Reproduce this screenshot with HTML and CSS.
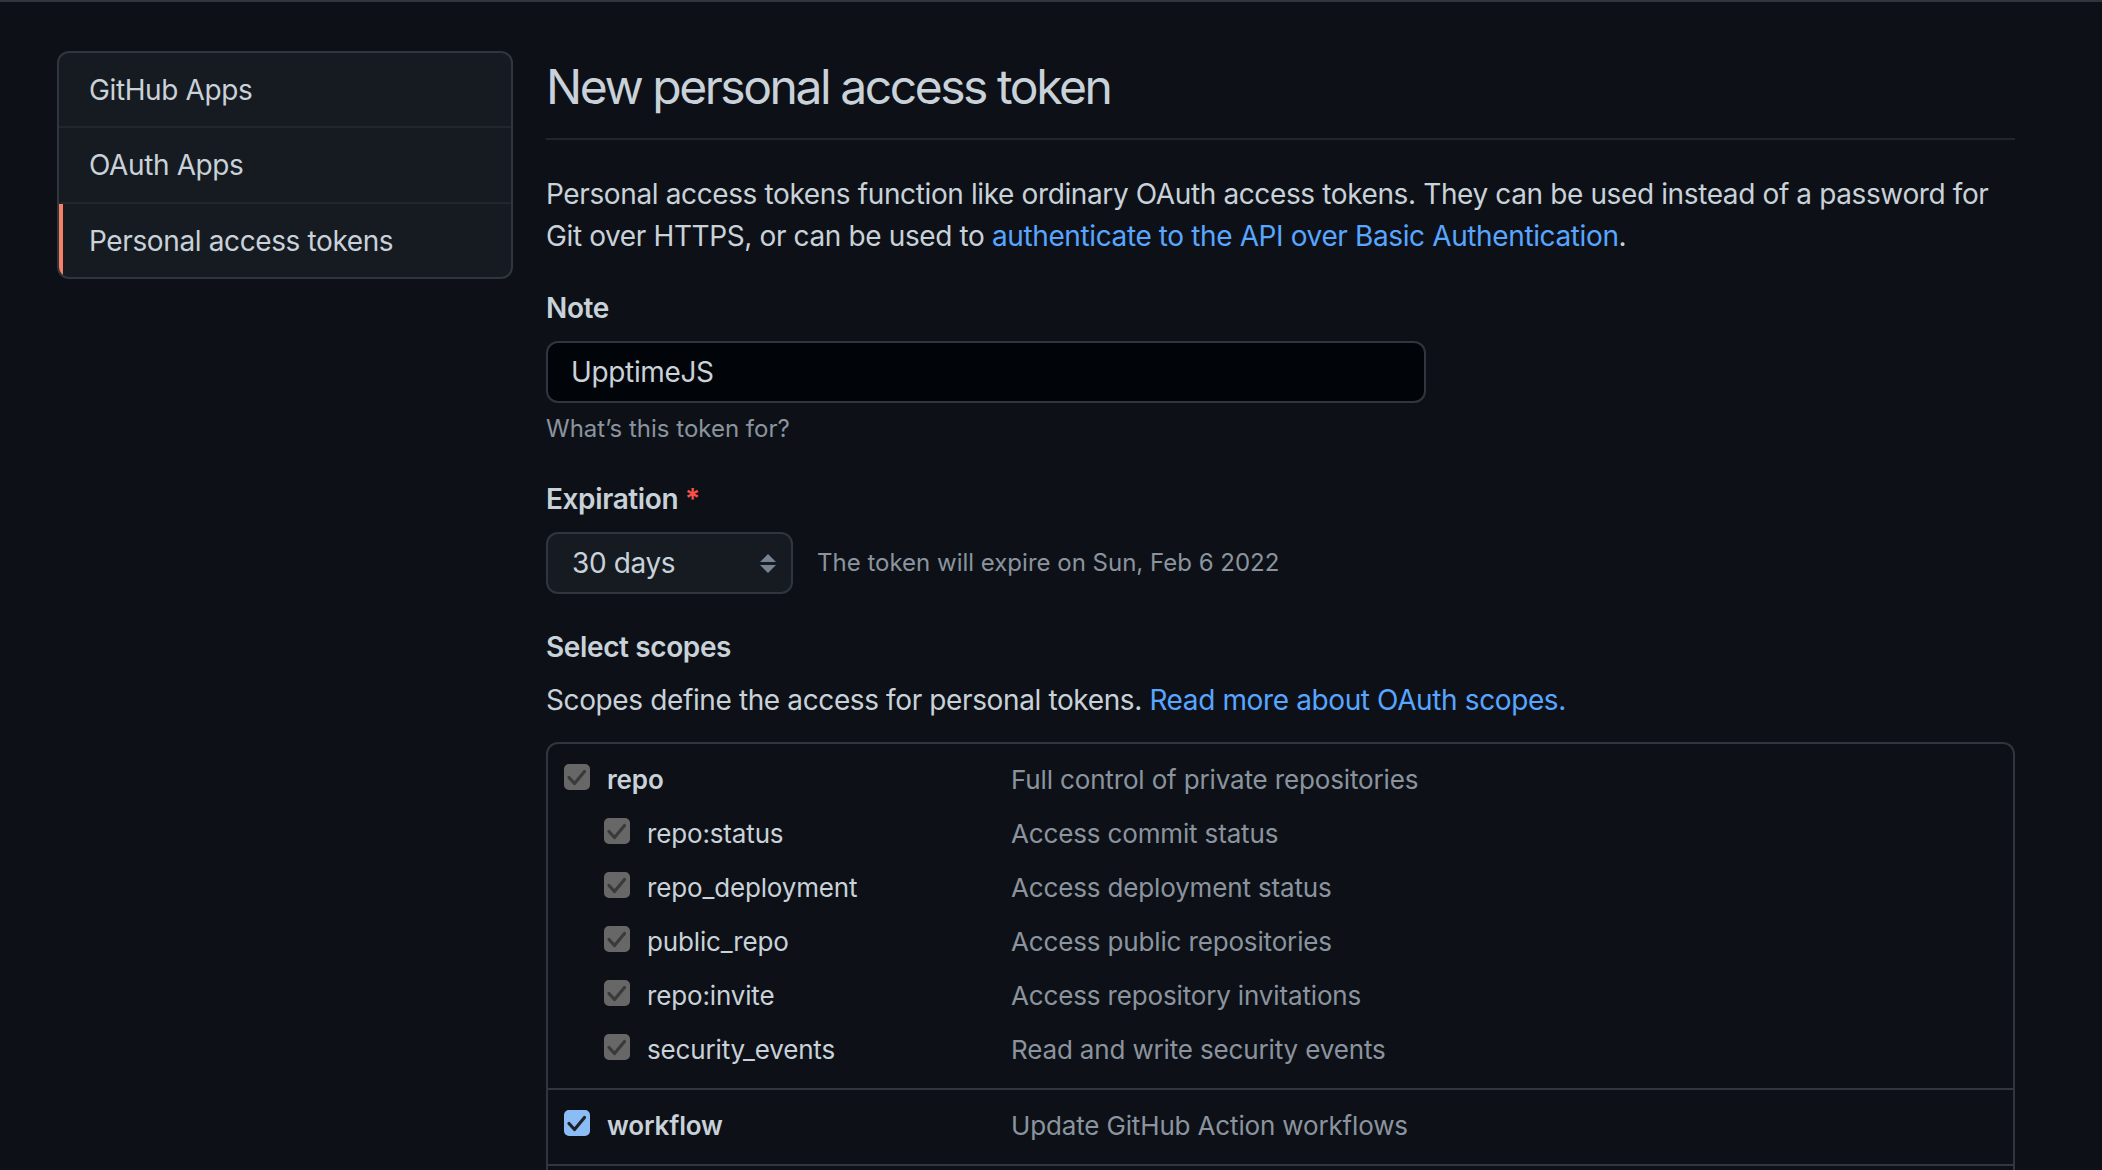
FILE: index.html
```html
<!DOCTYPE html>
<html lang="en">
<head>
<meta charset="utf-8">
<title>New personal access token</title>
<link rel="stylesheet" href="styles.css">
</head>
<body>
<div class="page">
  <nav class="menu">
    <a class="menu-item">GitHub Apps</a>
    <a class="menu-item">OAuth Apps</a>
    <a class="menu-item selected">Personal access tokens</a>
  </nav>

  <main class="content">
    <div class="subhead">
      <h1 class="subhead-title">New personal access token</h1>
    </div>

    <p class="intro">Personal access tokens function like ordinary OAuth access tokens. They can be used instead of a password for Git over HTTPS, or can be used to <a class="link">authenticate to the API over Basic Authentication</a>.</p>

    <div class="form-group note-group">
      <label class="label" for="note">Note</label>
      <input class="input" id="note" type="text" value="UpptimeJS">
      <p class="hint">What’s this token for?</p>
    </div>

    <div class="form-group expiry-group">
      <label class="label">Expiration <span class="req">*</span></label>
      <div class="expiry-row">
        <div class="select">
          <span>30 days</span>
          <svg class="select-arrows" width="16" height="19" viewBox="0 0 16 19"><path d="M0 8 L8 0 L16 8 Z M0 11 L16 11 L8 19 Z"/></svg>
        </div>
        <span class="expiry-note">The token will expire on Sun, Feb 6 2022</span>
      </div>
    </div>

    <div class="label scopes-label">Select scopes</div>
    <p class="scopes-intro">Scopes define the access for personal tokens. <a class="link">Read more about OAuth scopes.</a></p>

    <div class="scopes">
      <div class="scope-group">
        <div class="scope-name"><span class="cb cb-muted"><svg viewBox="0 0 26 26"><path d="M5 13.5 L10.5 19.5 L20.5 7.5"/></svg></span><span class="scope-title">repo</span></div>
        <div class="scope-desc">Full control of private repositories</div>

        <div class="scope-name sub"><span class="cb cb-muted"><svg viewBox="0 0 26 26"><path d="M5 13.5 L10.5 19.5 L20.5 7.5"/></svg></span><span>repo:status</span></div>
        <div class="scope-desc">Access commit status</div>

        <div class="scope-name sub"><span class="cb cb-muted"><svg viewBox="0 0 26 26"><path d="M5 13.5 L10.5 19.5 L20.5 7.5"/></svg></span><span>repo_deployment</span></div>
        <div class="scope-desc">Access deployment status</div>

        <div class="scope-name sub"><span class="cb cb-muted"><svg viewBox="0 0 26 26"><path d="M5 13.5 L10.5 19.5 L20.5 7.5"/></svg></span><span>public_repo</span></div>
        <div class="scope-desc">Access public repositories</div>

        <div class="scope-name sub"><span class="cb cb-muted"><svg viewBox="0 0 26 26"><path d="M5 13.5 L10.5 19.5 L20.5 7.5"/></svg></span><span>repo:invite</span></div>
        <div class="scope-desc">Access repository invitations</div>

        <div class="scope-name sub"><span class="cb cb-muted"><svg viewBox="0 0 26 26"><path d="M5 13.5 L10.5 19.5 L20.5 7.5"/></svg></span><span>security_events</span></div>
        <div class="scope-desc">Read and write security events</div>
      </div>

      <div class="scope-group">
        <div class="scope-name"><span class="cb cb-on"><svg viewBox="0 0 26 26"><path d="M5 13.5 L10.5 19.5 L20.5 7.5"/></svg></span><span class="scope-title">workflow</span></div>
        <div class="scope-desc">Update GitHub Action workflows</div>
      </div>

      <div class="scope-group">
        <div class="scope-name"><span class="cb"></span><span class="scope-title">write:packages</span></div>
        <div class="scope-desc">Upload packages to GitHub Package Registry</div>
      </div>
    </div>
  </main>
</div>
</body>
</html>
```

FILE: styles.css
```css
html, body {
  overflow: hidden;
}

body {
  margin: 0;
  background: #0d1117;
  color: #c9d1d9;
  font-family: "Inter", "Liberation Sans", sans-serif;
  font-size: 28px;
  line-height: 42px;
  letter-spacing: -0.38px;
  border-top: 2px solid #30363d;
}

.page {
  display: flex;
  align-items: flex-start;
  gap: 33px;
  padding: 49px 0 0 57px;
}

/* Sidebar menu */
.menu {
  width: 456px;
  box-sizing: border-box;
  background: #161b22;
  border: 2px solid #30363d;
  border-radius: 12px;
  overflow: hidden;
  display: flex;
  flex-direction: column;
  flex-shrink: 0;
}

.menu-item {
  position: relative;
  display: block;
  padding: 16px 30px 15.3px;
  color: #c9d1d9;
  border-top: 2px solid #21262d;
}

.menu-item:first-child {
  border-top: 0;
}

.menu-item.selected::before {
  content: "";
  position: absolute;
  left: 0;
  top: 0;
  bottom: 0;
  width: 4px;
  background: #f78166;
}

/* Main content */
.content {
  width: 1469px;
  flex-shrink: 0;
}

.subhead {
  padding-bottom: 15px;
  border-bottom: 2px solid #21262d;
}

.subhead-title {
  margin: 0;
  font-size: 48px;
  line-height: 72px;
  font-weight: 400;
  letter-spacing: -2.45px;
  color: #c9d1d9;
}

.intro {
  margin: 33px 0 0;
}

.link {
  color: #58a6ff;
  text-decoration: none;
}

.form-group {
  margin-top: 30px;
}

.expiry-group {
  margin-top: 31px;
}

.label {
  display: block;
  font-weight: 600;
  margin-bottom: 12px;
  color: #c9d1d9;
}

.req {
  color: #f85149;
}

.input {
  display: block;
  box-sizing: border-box;
  width: 880px;
  height: 62px;
  margin: 0;
  padding: 0 23px;
  background: #010409;
  border: 2px solid #30363d;
  border-radius: 12px;
  color: #c9d1d9;
  font-family: inherit;
  font-size: 28px;
  letter-spacing: -0.35px;
  outline: none;
}

.hint {
  margin: 8px 0 4px;
  font-size: 24px;
  line-height: 36px;
  letter-spacing: 0;
  color: #8b949e;
}

.expiry-row {
  display: flex;
  align-items: center;
  gap: 24px;
}

.select {
  box-sizing: border-box;
  width: 247px;
  height: 62px;
  display: flex;
  align-items: center;
  justify-content: space-between;
  padding: 0 15px 0 24px;
  background: #161b22;
  border: 2px solid #30363d;
  border-radius: 12px;
}

.select-arrows {
  fill: #768390;
}

.expiry-note {
  font-size: 24px;
  line-height: 36px;
  letter-spacing: 0;
  color: #8b949e;
}

.scopes-label {
  margin-top: 32px;
  margin-bottom: 11px;
}

.scopes-intro {
  margin: 0 0 21px;
}

/* Scopes table */
.scopes {
  border: 2px solid #30363d;
  border-radius: 12px;
}

.scope-group {
  display: grid;
  grid-template-columns: 463px 1fr;
  padding: 9px 0 11px;
  border-bottom: 2px solid #30363d;
  font-size: 26px;
  letter-spacing: -0.15px;
}

.scope-name {
  display: flex;
  align-items: flex-start;
  padding-left: 16px;
  line-height: 54px;
}

.scope-name.sub {
  padding-left: 56px;
}

.scope-title {
  font-weight: 600;
}

.scope-desc {
  line-height: 54px;
  color: #8b949e;
}

.cb {
  flex-shrink: 0;
  box-sizing: border-box;
  width: 26px;
  height: 26px;
  margin: 11px 17px 0 0;
  border-radius: 5px;
  border: 2px solid #6e7681;
  background: #0d1117;
}

.cb svg {
  display: block;
  width: 26px;
  height: 26px;
  margin: -2px;
  fill: none;
  stroke-width: 3.2;
  stroke-linecap: round;
  stroke-linejoin: round;
}

.cb-muted {
  background: #676767;
  border-color: #676767;
}

.cb-muted svg {
  stroke: #3a3a3a;
}

.cb-on {
  background: #8cbcf6;
  border-color: #8cbcf6;
}

.cb-on svg {
  stroke: #1f2328;
}
```
